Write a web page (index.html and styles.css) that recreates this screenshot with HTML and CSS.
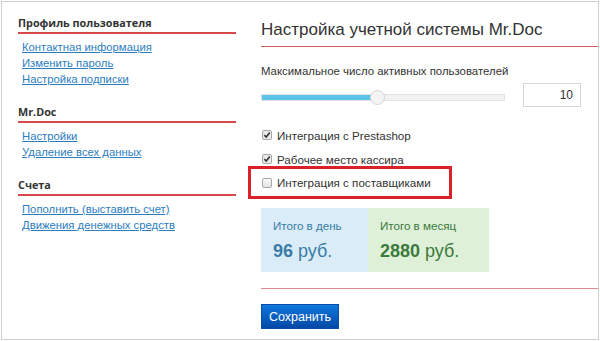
FILE: index.html
```html
<!DOCTYPE html>
<html lang="ru">
<head>
	<meta charset="UTF-8">
	<title>Настройка учетной системы Mr.Doc</title>
	<link rel="stylesheet" href="styles.css">
</head>
<body>
	<div class="frame">
		<div class="sidebar">
			<h3>Профиль пользователя</h3>
			<a href="#">Контактная информация</a>
			<a href="#">Изменить пароль</a>
			<a href="#">Настройка подписки</a>

			<h3>Mr.Doc</h3>
			<a href="#">Настройки</a>
			<a href="#">Удаление всех данных</a>

			<h3>Счета</h3>
			<a href="#">Пополнить (выставить счет)</a>
			<a href="#">Движения денежных средств</a>
		</div>

		<div class="main">
			<h1>Настройка учетной системы Mr.Doc</h1>

			<div class="label">Максимальное число активных пользователей</div>
			<div class="users">
				<div class="track">
					<div class="fill" style="width: 109px"></div>
					<div class="thumb" style="left: 108px"></div>
				</div>
				<input class="count" type="text" value="10">
			</div>

			<div class="opts">
				<label class="opt"><span class="box checked"></span>Интеграция с Prestashop</label>
				<label class="opt"><span class="box checked"></span>Рабочее место кассира</label>
				<label class="opt marked"><span class="box"></span>Интеграция с поставщиками</label>
			</div>

			<div class="totals">
				<div class="total day">
					<div class="cap">Итого в день</div>
					<div class="sum"><b>96</b> руб.</div>
				</div>
				<div class="total month">
					<div class="cap">Итого в месяц</div>
					<div class="sum"><b>2880</b> руб.</div>
				</div>
			</div>

			<div class="actions">
				<button>Сохранить</button>
			</div>
		</div>
	</div>
</body>
</html>
```

FILE: styles.css
```css
body{
	margin: 0;
	background-color: #fff;
	font-family: "Liberation Sans", Arial, sans-serif;
	color: #333;
}
.frame{
	display: flex;
	margin: 1px 1px 0 1px;
	height: 339px;
	box-sizing: border-box;
	border: 1px solid #cfcfcf;
}
.sidebar{
	width: 218px;
	padding: 13px 0 0 16px;
	flex-shrink: 0;
}
.sidebar h3{
	margin: 17px 0 0 0;
	padding-bottom: 2px;
	border-bottom: 2px solid #d7474c;
	font-family: "Open Sans", sans-serif;
	font-size: 10.8px;
	font-weight: 700;
	line-height: 15px;
	color: #333;
}
.sidebar h3:first-child{
	margin-top: 0;
}
.sidebar a{
	display: block;
	margin-left: 4px;
	font-size: 11.3px;
	line-height: 16px;
	color: #2d7dbf;
}
.sidebar h3 + a{
	margin-top: 5px;
}
.main{
	flex: 1;
	margin-left: 25px;
	padding-top: 17px;
}
h1{
	margin: 0;
	padding-bottom: 5px;
	border-bottom: 1px solid #cf5d62;
	font-size: 17px;
	font-weight: normal;
	line-height: 22px;
	color: #333;
}
.label{
	margin-top: 16px;
	font-size: 11.4px;
	line-height: 16px;
	color: #333;
}
.users{
	display: flex;
	align-items: flex-start;
	margin-top: 4px;
	padding-right: 17px;
}
.track{
	position: relative;
	width: 242px;
	height: 5px;
	margin-top: 11px;
	background: #f2f2f2;
	border: 1px solid #e2e2e2;
}
.fill{
	height: 100%;
	background: #5bc3ea;
}
.thumb{
	position: absolute;
	top: -5px;
	width: 13px;
	height: 13px;
	border-radius: 50%;
	background: #f4f4f4;
	border: 1px solid #d4d4d4;
}
.count{
	width: 58px;
	height: 24px;
	margin-left: auto;
	box-sizing: border-box;
	border: 1px solid #d6d6d6;
	padding: 0 7px;
	text-align: right;
	font-family: "Liberation Sans", Arial, sans-serif;
	font-size: 12px;
	color: #333;
}
.opts{
	margin-top: 16px;
}
.opt{
	display: flex;
	align-items: center;
	height: 24px;
	font-size: 11.6px;
	color: #333;
}
.box{
	width: 8px;
	height: 8px;
	margin: 0 5px 0 1px;
	border: 1px solid #a8a8a8;
	border-radius: 2px;
	background: linear-gradient(#fafafa, #e2e2e2);
}
.box.checked{
	background: #e9e9e9 url("data:image/svg+xml,%3Csvg xmlns='http://www.w3.org/2000/svg' viewBox='0 0 8 8'%3E%3Cpath d='M1.3 4.2 3.2 6 6.8 1.6' fill='none' stroke='%23333' stroke-width='1.6'/%3E%3C/svg%3E") center/8px 8px no-repeat;
}
.opt.marked{
	width: 188px;
	height: 27px;
	margin: -5px 0 0 -13px;
	padding-left: 10px;
	border: 3px solid #dc2229;
}
.totals{
	display: flex;
	margin-top: 9px;
}
.total{
	height: 64px;
	padding: 10px 12px 0 12px;
	box-sizing: border-box;
}
.cap{
	font-size: 11.6px;
	line-height: 16px;
}
.sum{
	margin-top: 6px;
	font-size: 18px;
	line-height: 22px;
}
.day{
	width: 107px;
	background: #d9ecf7;
	color: #3a7ca5;
}
.month{
	width: 121px;
	background: #dff0d8;
	color: #3c7a3d;
}
.actions{
	margin-top: 16px;
	padding-top: 15px;
	border-top: 1px solid #e08c8f;
}
button{
	width: 78px;
	height: 25px;
	border: 1px solid #0b4da6;
	background: linear-gradient(#0e77de, #0448a6);
	color: #fff;
	font-family: "Liberation Sans", Arial, sans-serif;
	font-size: 12.5px;
	padding: 0;
}
```
